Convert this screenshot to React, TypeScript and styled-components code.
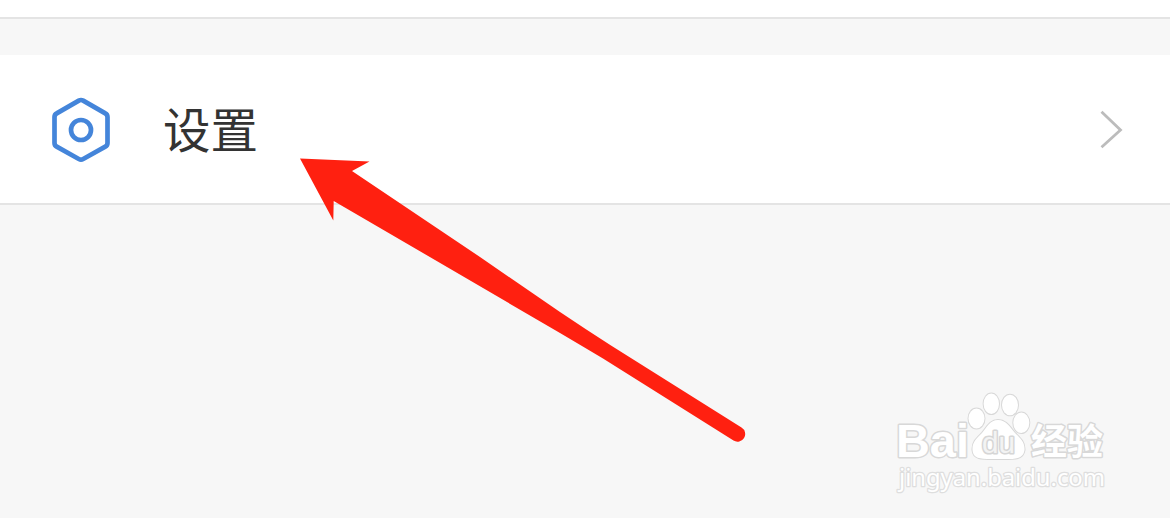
import React from "react";
import styled, { createGlobalStyle } from "styled-components";

const GlobalStyle = createGlobalStyle`
  body {
    margin: 0;
    background: #f7f7f7;
    font-family: "Noto Sans CJK SC", sans-serif;
  }
`;

const Screen = styled.main`
  position: relative;
  display: flex;
  flex-direction: column;
  width: 1170px;
  height: 518px;
  overflow: hidden;
  background: #f7f7f7;
`;

const Panel = styled.section<{ $height: number }>`
  box-sizing: border-box;
  display: flex;
  align-items: center;
  height: ${(p) => p.$height}px;
  background: #fff;
  border-bottom: 2px solid #e4e4e4;
`;

const Gap = styled.div`
  height: 36px;
`;

const SettingsRow = styled(Panel)`
  padding: 0 46px 0 50px;
`;

const Label = styled.span`
  flex: 1;
  margin: 0 0 3px 51px;
  font-size: 47.5px;
  line-height: 64px;
  color: #333;
`;

const NutIcon = styled.svg`
  width: 62px;
  height: 68px;
`;

const Chevron = styled.svg`
  width: 26px;
  height: 42px;
`;

const Pointer = styled.svg`
  position: absolute;
  left: 296px;
  top: 154px;
  width: 454px;
  height: 292px;
`;

const Watermark = styled.svg`
  position: absolute;
  left: 890px;
  top: 386px;
  width: 224px;
  height: 112px;
  fill: #fff;
  stroke: #d8d8d8;
  stroke-width: 2px;
  stroke-linejoin: round;
  paint-order: stroke;
`;

const Brand = styled.text`
  font: bold 46px "Liberation Sans", sans-serif;
  stroke-width: 3px;
`;

const PawText = styled.text`
  font: 29px "Liberation Sans", sans-serif;
  fill: #f3f3f3;
  stroke: #d6d6d6;
  stroke-width: 3px;
`;

const BrandChinese = styled.text`
  font: bold 36px "Noto Sans CJK SC", sans-serif;
  stroke-width: 3px;
`;

const Address = styled.text`
  font: 24px "Noto Sans", sans-serif;
  stroke: #dedede;
  stroke-width: 2.6px;
`;

export default function App() {
  return (
    <Screen>
      <GlobalStyle />
      <Panel $height={19} />
      <Gap />
      <SettingsRow $height={150}>
        <NutIcon viewBox="0 0 62 68" fill="none" stroke="#4485da">
          <path
            d="M28.8 5.6Q31 4.4 33.2 5.6L55.3 18.4Q57.5 19.6 57.5 22.1V47.9Q57.5 50.4 55.3 51.6L33.2 64Q31 65.2 28.8 64L6.7 51.6Q4.5 50.4 4.5 47.9V22.1Q4.5 19.6 6.7 18.4Z"
            strokeWidth="4.7"
          />
          <circle cx="31" cy="35" r="10" strokeWidth="4.7" />
        </NutIcon>
        <Label>设置</Label>
        <Chevron viewBox="0 0 26 42" fill="none" stroke="#bcbcbc" strokeWidth="2.8">
          <path d="M3.5 3.8L22.5 22L3.5 39.2" />
        </Chevron>
      </SettingsRow>
      <Pointer viewBox="296 154 454 292" fill="#ff2010">
        <path d="M300 158.5L369.5 161.5L352 171L480 257L560 312Q586 329.5 611 345.5L741.5 427.5A7.6 7.6 0 0 1 733.5 440.6L603 358.5Q582 346 560 333L435 260L333.7 201L333.3 220.5Z" />
      </Pointer>
      <Watermark viewBox="890 386 224 112">
        <Brand x="896" y="456.5" textLength="73" lengthAdjust="spacingAndGlyphs">Bai</Brand>
        <ellipse cx="976.5" cy="418.5" rx="8" ry="10" />
        <ellipse cx="991.3" cy="403.8" rx="7.7" ry="10.3" />
        <ellipse cx="1010" cy="405" rx="8" ry="10.3" />
        <ellipse cx="1021.3" cy="422.8" rx="8" ry="10.3" />
        <path d="M998 420C990 420 987 427 982 433C977 438 972 442 972.5 450C973 460 983 459 998 459C1014 459 1023 460 1024.5 450C1025 442 1020 438 1015 433C1010 427 1006 420 998 420Z" />
        <PawText x="982" y="453" textLength="33" lengthAdjust="spacingAndGlyphs">du</PawText>
        <BrandChinese x="1031" y="454.5" textLength="72" lengthAdjust="spacingAndGlyphs">经验</BrandChinese>
        <Address x="899" y="485.5" textLength="206" lengthAdjust="spacingAndGlyphs">jingyan.baidu.com</Address>
      </Watermark>
    </Screen>
  );
}
